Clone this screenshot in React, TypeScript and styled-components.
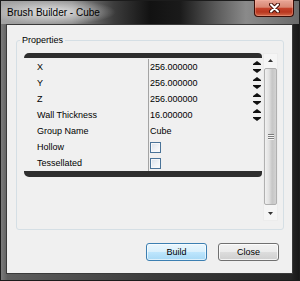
import React from "react"
import styled, { createGlobalStyle } from "styled-components"

const GlobalStyle = createGlobalStyle`
  html, body {
    margin: 0;
    padding: 0;
    background: #000;
  }
  body {
    font-family: "Liberation Sans", Arial, sans-serif;
  }
`

const Window = styled.div`
  box-sizing: border-box;
  width: 300px;
  height: 281px;
  display: flex;
  flex-direction: column;
  padding: 0 7px 7px 6px;
  background:
    radial-gradient(ellipse 64px 13px at 52px 12px, rgba(232, 232, 232, 0.95), rgba(232, 232, 232, 0)),
    linear-gradient(to right, #a4a4a4 0%, #8e8e8e 24%, #3c3c3c 38%, #121212 50%, #1a1a1a 60%, #5a5a5a 72%, #8a8a8a 82%, #6a6a6a 100%) top / 100% 24px no-repeat,
    linear-gradient(to right, #808080 0%, #5e5e5e 2.5%, #3c3c3c 50%, #262626 97%, #161616 100%);
  box-shadow: inset 0 0 0 1px #1c1c1c;
`

const TitleBar = styled.div`
  height: 24px;
  display: flex;
  align-items: flex-start;
  justify-content: space-between;
  padding-left: 1px;
  margin-right: -1px;
`

const Title = styled.div`
  margin-top: 7px;
  font-size: 10px;
  line-height: 12px;
  color: #000;
`

const CloseButton = styled.div`
  box-sizing: border-box;
  width: 40px;
  height: 17px;
  display: flex;
  align-items: center;
  justify-content: center;
  border: 1px solid #3a0c06;
  border-top: none;
  border-radius: 0 0 4px 4px;
  background: linear-gradient(to bottom, #e8a698 0%, #d98773 45%, #c4412a 52%, #b8361f 75%, #d2694a 100%);
  box-shadow: inset 0 0 0 1px rgba(255, 190, 170, 0.35);
`

const Client = styled.div`
  flex: 1;
  display: flex;
  flex-direction: column;
  border: 1px solid #3a3a3a;
  background: #f0f0f0;
`

const GroupBox = styled.div`
  position: relative;
  box-sizing: border-box;
  height: 190px;
  margin: 15px 8px 0 9px;
  padding: 12px 5px 0 7px;
  display: flex;
  align-items: flex-start;
  gap: 1px;
  border: 1px solid #d5dfe5;
  border-radius: 3px;
`

const GroupTitle = styled.div`
  position: absolute;
  top: -6px;
  left: 3px;
  padding: 0 2px;
  background: #f0f0f0;
  font-size: 9px;
  line-height: 11px;
  color: #000;
`

const PropertyGrid = styled.div`
  width: 238px;
  display: flex;
  flex-direction: column;
`

const Bar = styled.div<{ bottom?: boolean }>`
  height: ${({ bottom }) => (bottom ? "6px" : "5px")};
  background: #2e2e2e;
  border-radius: ${({ bottom }) => (bottom ? "0 0 4px 5px" : "5px 4px 0 0")};
`

const Rows = styled.div`
  padding-top: 1px;
  display: flex;
  flex-direction: column;
`

const Row = styled.div`
  height: 16px;
  display: grid;
  grid-template-columns: 124px 1fr;
  font-size: 9px;
  line-height: 16px;
  color: #000;
`

const Label = styled.div`
  padding-left: 13px;
  white-space: nowrap;
`

const Value = styled.div`
  display: flex;
  align-items: center;
  justify-content: space-between;
  padding-left: 1px;
  border-left: 1px solid #a4a4a4;
`

const Spinner = styled.div`
  box-sizing: border-box;
  height: 16px;
  padding: 2px 0 2px;
  margin-right: 1px;
  display: flex;
  flex-direction: column;
  justify-content: space-between;
`

const CheckBox = styled.div`
  box-sizing: border-box;
  width: 11px;
  height: 11px;
  border: 1px solid #4a7398;
  background: linear-gradient(135deg, #d6dfe8 0%, #eef2f6 55%, #fdfdfd 100%);
  box-shadow: inset 0 0 0 1px #f6f8fa;
`

const ScrollBar = styled.div`
  box-sizing: border-box;
  width: 15px;
  height: 168px;
  display: flex;
  flex-direction: column;
  background: #f5f5f5;
  border: 1px solid #ececec;
`

const ScrollArrow = styled.div`
  height: 13px;
  display: flex;
  align-items: center;
  justify-content: center;
`

const Thumb = styled.div`
  box-sizing: border-box;
  height: 137px;
  margin: 1px 0 2px;
  display: flex;
  flex-direction: column;
  align-items: center;
  justify-content: center;
  gap: 1px;
  border: 1px solid #b0b0b0;
  border-radius: 2px;
  background: linear-gradient(to right, #f0f0f0 0%, #e2e2e2 35%, #c6c6c6 65%, #d2d2d2 100%);
`

const Grip = styled.div`
  width: 6px;
  height: 1px;
  background: #7c7c7c;
  box-shadow: 0 1px 0 #f4f4f4;
`

const ButtonRow = styled.div`
  display: flex;
  justify-content: flex-end;
  gap: 11px;
  margin-top: 13px;
  padding-right: 13px;
`

const Button = styled.button<{ primary?: boolean }>`
  box-sizing: border-box;
  width: 61px;
  height: 18px;
  padding: 0;
  font-family: "Liberation Sans", Arial, sans-serif;
  font-size: 9px;
  color: #000;
  border-radius: 3px;
  border: 1px solid ${({ primary }) => (primary ? "#3c7fb1" : "#707070")};
  background: ${({ primary }) =>
    primary
      ? "linear-gradient(to bottom, #eaf6fd 0%, #d9f0fc 50%, #bee6fd 50%, #a7d9f5 100%)"
      : "linear-gradient(to bottom, #f2f2f2 0%, #ebebeb 50%, #dddddd 50%, #cfcfcf 100%)"};
  box-shadow: inset 0 0 0 1px ${({ primary }) => (primary ? "rgba(255,255,255,0.6)" : "rgba(255,255,255,0.75)")};
`

// little black up/down arrows of a spin box
const SpinArrow: React.FC<{ down?: boolean }> = ({ down }) => (
  <svg width="8" height="4" viewBox="0 0 8 4">
    {down ? (
      <polygon points="0,0 8,0 8,1 4,4 0,1" fill="#111" />
    ) : (
      <polygon points="4,0 8,3 8,4 0,4 0,3" fill="#111" />
    )}
  </svg>
)

const SmallArrow: React.FC<{ down?: boolean }> = ({ down }) => (
  <svg width="5" height="3" viewBox="0 0 5 3">
    <polygon points={down ? "0,0 5,0 2.5,3" : "2.5,0 5,3 0,3"} fill="#333" />
  </svg>
)

type Prop = { name: string; value?: string; kind: "number" | "text" | "check" }

const props: Prop[] = [
  { name: "X", value: "256.000000", kind: "number" },
  { name: "Y", value: "256.000000", kind: "number" },
  { name: "Z", value: "256.000000", kind: "number" },
  { name: "Wall Thickness", value: "16.000000", kind: "number" },
  { name: "Group Name", value: "Cube", kind: "text" },
  { name: "Hollow", kind: "check" },
  { name: "Tessellated", kind: "check" },
]

const App: React.FC = () => {
  return (
    <>
      <GlobalStyle />
      <Window>
        <TitleBar>
          <Title>Brush Builder - Cube</Title>
          <CloseButton>
            <svg width="11" height="10" viewBox="0 0 11 10">
              <path d="M2 1.5 L9 8.5 M9 1.5 L2 8.5" stroke="#4a140c" strokeWidth="4" strokeLinecap="round" />
              <path d="M2 1.5 L9 8.5 M9 1.5 L2 8.5" stroke="#fff" strokeWidth="2" strokeLinecap="round" />
            </svg>
          </CloseButton>
        </TitleBar>
        <Client>
          <GroupBox>
            <GroupTitle>Properties</GroupTitle>
            <PropertyGrid>
              <Bar />
              <Rows>
                {props.map((p) => (
                  <Row key={p.name}>
                    <Label>{p.name}</Label>
                    <Value>
                      {p.kind === "check" ? <CheckBox /> : <span>{p.value}</span>}
                      {p.kind === "number" && (
                        <Spinner>
                          <SpinArrow />
                          <SpinArrow down />
                        </Spinner>
                      )}
                    </Value>
                  </Row>
                ))}
              </Rows>
              <Bar bottom />
            </PropertyGrid>
            <ScrollBar>
              <ScrollArrow>
                <SmallArrow />
              </ScrollArrow>
              <Thumb>
                <Grip />
                <Grip />
                <Grip />
              </Thumb>
              <ScrollArrow>
                <SmallArrow down />
              </ScrollArrow>
            </ScrollBar>
          </GroupBox>
          <ButtonRow>
            <Button primary>Build</Button>
            <Button>Close</Button>
          </ButtonRow>
        </Client>
      </Window>
    </>
  )
}

export default App
